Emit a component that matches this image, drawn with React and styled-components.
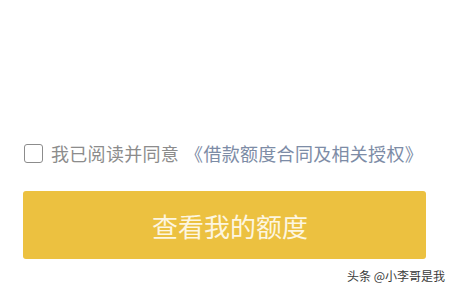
import React, { useState } from "react";
import styled, { createGlobalStyle } from "styled-components";

const Global = createGlobalStyle`
  html, body { margin: 0; padding: 0; background: #ffffff; }
  body { font-family: "Noto Sans CJK SC", "Noto Sans", sans-serif; }
`;

const Page = styled.div`
  width: 451px;
  height: 289px;
  display: flex;
  flex-direction: column;
  background: #ffffff;
  overflow: hidden;
`;

const Spacer = styled.div`
  height: 143px;
`;

const AgreeRow = styled.label`
  display: flex;
  align-items: center;
  gap: 8px;
  padding-left: 24px;
  height: 20px;
  cursor: pointer;
`;

const Box = styled.span`
  width: 17px;
  height: 17px;
  border: 1.6px solid #8c8c8c;
  border-radius: 3px;
  flex: none;
  background: ${(p) => (p.$checked ? "#ecc140" : "transparent")};
`;

const AgreeText = styled.span`
  font-size: 18px;
  line-height: 20px;
  letter-spacing: 0.3px;
  color: #8c8c8c;
  white-space: nowrap;
`;

const Link = styled.span`
  color: #7d8ca6;
  padding-left: 6px;
`;

const Button = styled.button`
  margin: 28px 0 0 23px;
  width: 403px;
  height: 68px;
  border: none;
  border-radius: 3px;
  background: #ecc140;
  color: #fdf6e0;
  font-family: "Noto Sans CJK SC", "Noto Sans", sans-serif;
  font-size: 26px;
  display: flex;
  align-items: center;
  justify-content: center;
  padding: 0 0 0 11px;
`;

const Footer = styled.div`
  display: flex;
  justify-content: flex-end;
  padding: 9px 6px 0 0;
`;

const Watermark = styled.span`
  font-size: 12px;
  line-height: 16px;
  color: #3a3a3a;
  white-space: nowrap;
`;

export default function App() {
  const [checked, setChecked] = useState(false);
  return (
    <Page>
      <Global />
      <Spacer />
      <AgreeRow onClick={() => setChecked(!checked)}>
        <Box $checked={checked} />
        <AgreeText>
          我已阅读并同意<Link>《借款额度合同及相关授权》</Link>
        </AgreeText>
      </AgreeRow>
      <Button>查看我的额度</Button>
      <Footer>
        <Watermark>头条 @小李哥是我</Watermark>
      </Footer>
    </Page>
  );
}
